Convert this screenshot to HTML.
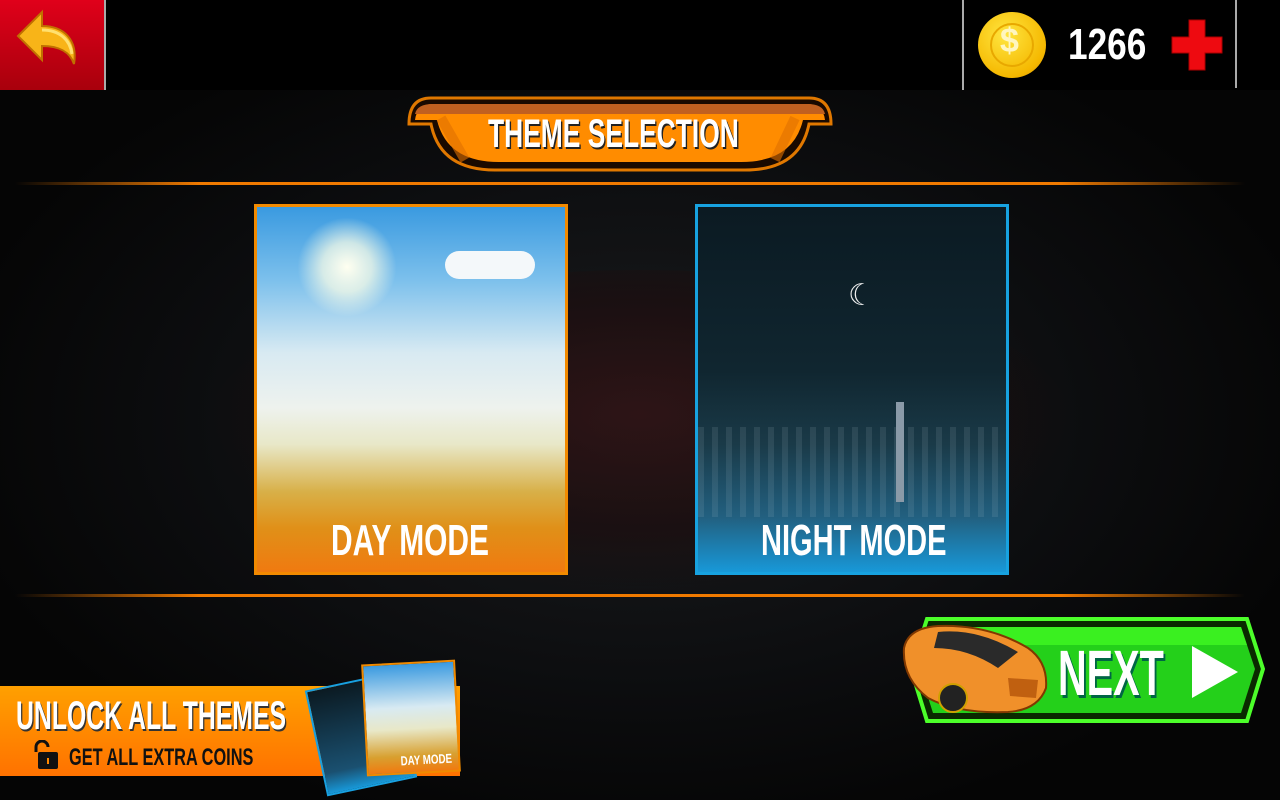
<!DOCTYPE html>
<html><head><meta charset="utf-8"><style>
*{margin:0;padding:0;box-sizing:border-box}
body{width:1280px;height:800px;overflow:hidden;background:#000;position:relative;font-family:"Liberation Sans Narrow","Liberation Sans",sans-serif;}
.cond{font-family:"Liberation Sans Narrow","Liberation Sans",sans-serif;font-weight:bold;color:#fff;position:absolute;white-space:nowrap;}
.bg{position:absolute;left:0;top:90px;width:1280px;height:710px;background:radial-gradient(ellipse 700px 420px at 640px 330px,#1b1c1e 0%,#0d0e10 60%,#050505 100%);}
.carsil{position:absolute;left:205px;top:270px;width:870px;height:320px;border-radius:50%;background:radial-gradient(ellipse at 50% 45%,rgba(50,18,20,.8) 0%,rgba(30,12,13,.6) 45%,rgba(10,5,5,0) 70%);}
.line{position:absolute;left:15px;width:1230px;height:3px;background:linear-gradient(90deg,rgba(240,120,0,0),#f07a00 15%,#f07a00 85%,rgba(240,120,0,0));}
.card{position:absolute;width:314px;height:371px;top:204px;overflow:hidden;}
</style></head><body>
<div class="bg"></div>
<div class="carsil"></div>
<div style="position:absolute;left:0;top:0;width:104px;height:90px;background:linear-gradient(#e0001a,#a8000c);"></div>
<div style="position:absolute;left:104px;top:0;width:2px;height:90px;background:#aaa"></div>
<svg style="position:absolute;left:12px;top:8px" width="70" height="70" viewBox="0 0 70 70"><path d="M6 28 L30 4 L30 18 C52 18 66 32 62 56 C58 44 48 38 30 38 L30 52 Z" fill="#f8b418" stroke="#c07000" stroke-width="2"/><path d="M30 22 C48 22 58 32 60 46" stroke="#ffe070" stroke-width="3" fill="none"/></svg>
<div style="position:absolute;left:962px;top:0;width:2px;height:90px;background:#aaa"></div>
<div style="position:absolute;left:1235px;top:0;width:2px;height:88px;background:#aaa"></div>
<div style="position:absolute;left:978px;top:12px;width:68px;height:66px;border-radius:50%;background:radial-gradient(circle at 40% 35%,#ffe640,#f5b800 70%,#d89000);"></div>
<div style="position:absolute;left:990px;top:23px;width:44px;height:44px;border-radius:50%;border:2px solid #e8a800;"></div>
<div class="cond" style="left:1000px;top:22px;font-size:34px;color:#fff6c0">$</div>
<div class="cond" style="left:1068px;top:20px;font-size:44px;transform:scaleX(0.8);transform-origin:left">1266</div>
<svg style="position:absolute;left:1170px;top:18px" width="54" height="54" viewBox="0 0 54 54"><path d="M19 2h16v17h17v16H35v17H19V35H2V19h17z" fill="#ee0a10" stroke="#a00" stroke-width="1"/></svg>
<svg style="position:absolute;left:405px;top:94px" width="430" height="80" viewBox="0 0 430 80"><path d="M4 30 Q4 4 26 4 H404 Q426 4 426 30 H404 Q395 76 340 76 H90 Q35 76 26 30 Z" fill="#1a0a00" stroke="#e07800" stroke-width="3"/><path d="M10 26 Q12 10 28 10 H402 Q418 10 420 26 H398 Q388 68 336 68 H94 Q42 68 32 26 Z" fill="#ff8c00"/><path d="M28 10 H402 Q418 10 420 20 H10 Q12 10 28 10Z" fill="#c06020"/><path d="M36 24 L60 66 M390 24 L370 66" stroke="#e07000" stroke-width="10" opacity=".6"/></svg>
<div class="cond" style="left:488px;top:112px;font-size:40px;transform:scaleX(0.66);transform-origin:left;text-shadow:2px 2px 0 #222">THEME SELECTION</div>
<div class="line" style="top:182px"></div>
<div class="line" style="top:594px"></div>
<div class="card" style="left:254px;border:3px solid #f28a00;background:linear-gradient(180deg,#3a9ae0 0%,#7cc0ec 20%,#d8eaf2 40%,#eef2ee 55%,#e8e8c8 65%,#d8b048 78%,#e09018 88%,#f07a10 100%);">
<div style="position:absolute;left:40px;top:10px;width:100px;height:100px;border-radius:50%;background:radial-gradient(circle,#fffff0 0%,rgba(255,255,230,.7) 35%,rgba(255,255,255,0) 70%)"></div>
<div style="position:absolute;left:188px;top:44px;width:90px;height:28px;border-radius:14px;background:#f4f8fa"></div>
</div>
<div class="cond" style="left:331px;top:516px;font-size:44px;transform:scaleX(0.68);transform-origin:left">DAY MODE</div>
<div class="card" style="left:695px;border:3px solid #17a2e0;background:linear-gradient(180deg,#0b1a22 0%,#102630 45%,#1a3a48 65%,#226080 85%,#1898d8 100%);">
<div style="position:absolute;left:0;top:220px;width:310px;height:90px;background:repeating-linear-gradient(90deg,rgba(180,200,210,.12) 0 6px,rgba(0,0,0,0) 6px 14px)"></div>
<div style="position:absolute;left:198px;top:195px;width:8px;height:100px;background:#8a9aa8"></div>
</div>
<div class="cond" style="left:848px;top:278px;font-size:30px;color:#eee;font-weight:normal">☾</div>
<div class="cond" style="left:761px;top:516px;font-size:44px;transform:scaleX(0.66);transform-origin:left">NIGHT MODE</div>
<div style="position:absolute;left:0;top:686px;width:460px;height:90px;background:linear-gradient(180deg,#ffa000,#ff7200);"></div>
<div class="cond" style="left:16px;top:694px;font-size:40px;transform:scaleX(0.62);transform-origin:left;text-shadow:2px 2px 0 #333">UNLOCK ALL THEMES</div>
<svg style="position:absolute;left:33px;top:740px" width="28" height="30" viewBox="0 0 28 30"><path d="M3 12 V7 a6 6 0 0 1 12 0" stroke="#111" stroke-width="3" fill="none"/><rect x="5" y="12" width="20" height="17" rx="2" fill="#111"/><rect x="14" y="18" width="2" height="6" fill="#f80"/></svg>
<div class="cond" style="left:69px;top:744px;font-size:24px;color:#111;transform:scaleX(0.68);transform-origin:left">GET ALL EXTRA COINS</div>
<div style="position:absolute;left:315px;top:680px;width:92px;height:108px;background:linear-gradient(#0b1a22,#1a5070 80%,#1898d8);border:2px solid #18a0e0;transform:rotate(-12deg)"></div>
<div style="position:absolute;left:364px;top:662px;width:94px;height:112px;background:linear-gradient(#3a9ae0,#d8eaf2 40%,#e8e8c8 60%,#d8a030 85%,#f07a10);border:2px solid #f08a00;transform:rotate(-3deg)"></div>
<div class="cond" style="left:392px;top:752px;font-size:13px;transform:rotate(-3deg) scaleX(0.75)">DAY MODE</div>
<svg style="position:absolute;left:905px;top:615px" width="362" height="110" viewBox="0 0 362 110"><path d="M22 4 H342 L358 54 L342 106 H22 L6 54 Z" fill="#0a2a00" stroke="#4cff2a" stroke-width="4"/><path d="M28 12 H336 L350 54 L336 98 H28 L14 54 Z" fill="#24d01a"/><path d="M28 12 H336 L342 30 H20Z" fill="#3af020"/></svg>
<svg style="position:absolute;left:898px;top:618px" width="160" height="100" viewBox="0 0 160 100"><path d="M6 30 Q10 10 40 8 Q90 6 130 30 Q150 44 148 70 Q140 92 110 94 Q60 96 30 80 Q4 60 6 30Z" fill="#f0902a" stroke="#803800" stroke-width="2"/><path d="M40 14 Q80 10 120 34 L100 50 Q70 30 36 30Z" fill="#2a2a2a"/><circle cx="55" cy="80" r="14" fill="#222" stroke="#d0a000" stroke-width="2"/><path d="M110 60 L140 62 L138 80 L112 78Z" fill="#c06010"/></svg>
<div class="cond" style="left:1058px;top:636px;font-size:64px;transform:scaleX(0.62);transform-origin:left;text-shadow:3px 3px 0 #064">NEXT</div>
<svg style="position:absolute;left:1190px;top:644px" width="50" height="56" viewBox="0 0 50 56"><path d="M2 2 L48 28 L2 54 Z" fill="#fff"/></svg>
</body></html>
